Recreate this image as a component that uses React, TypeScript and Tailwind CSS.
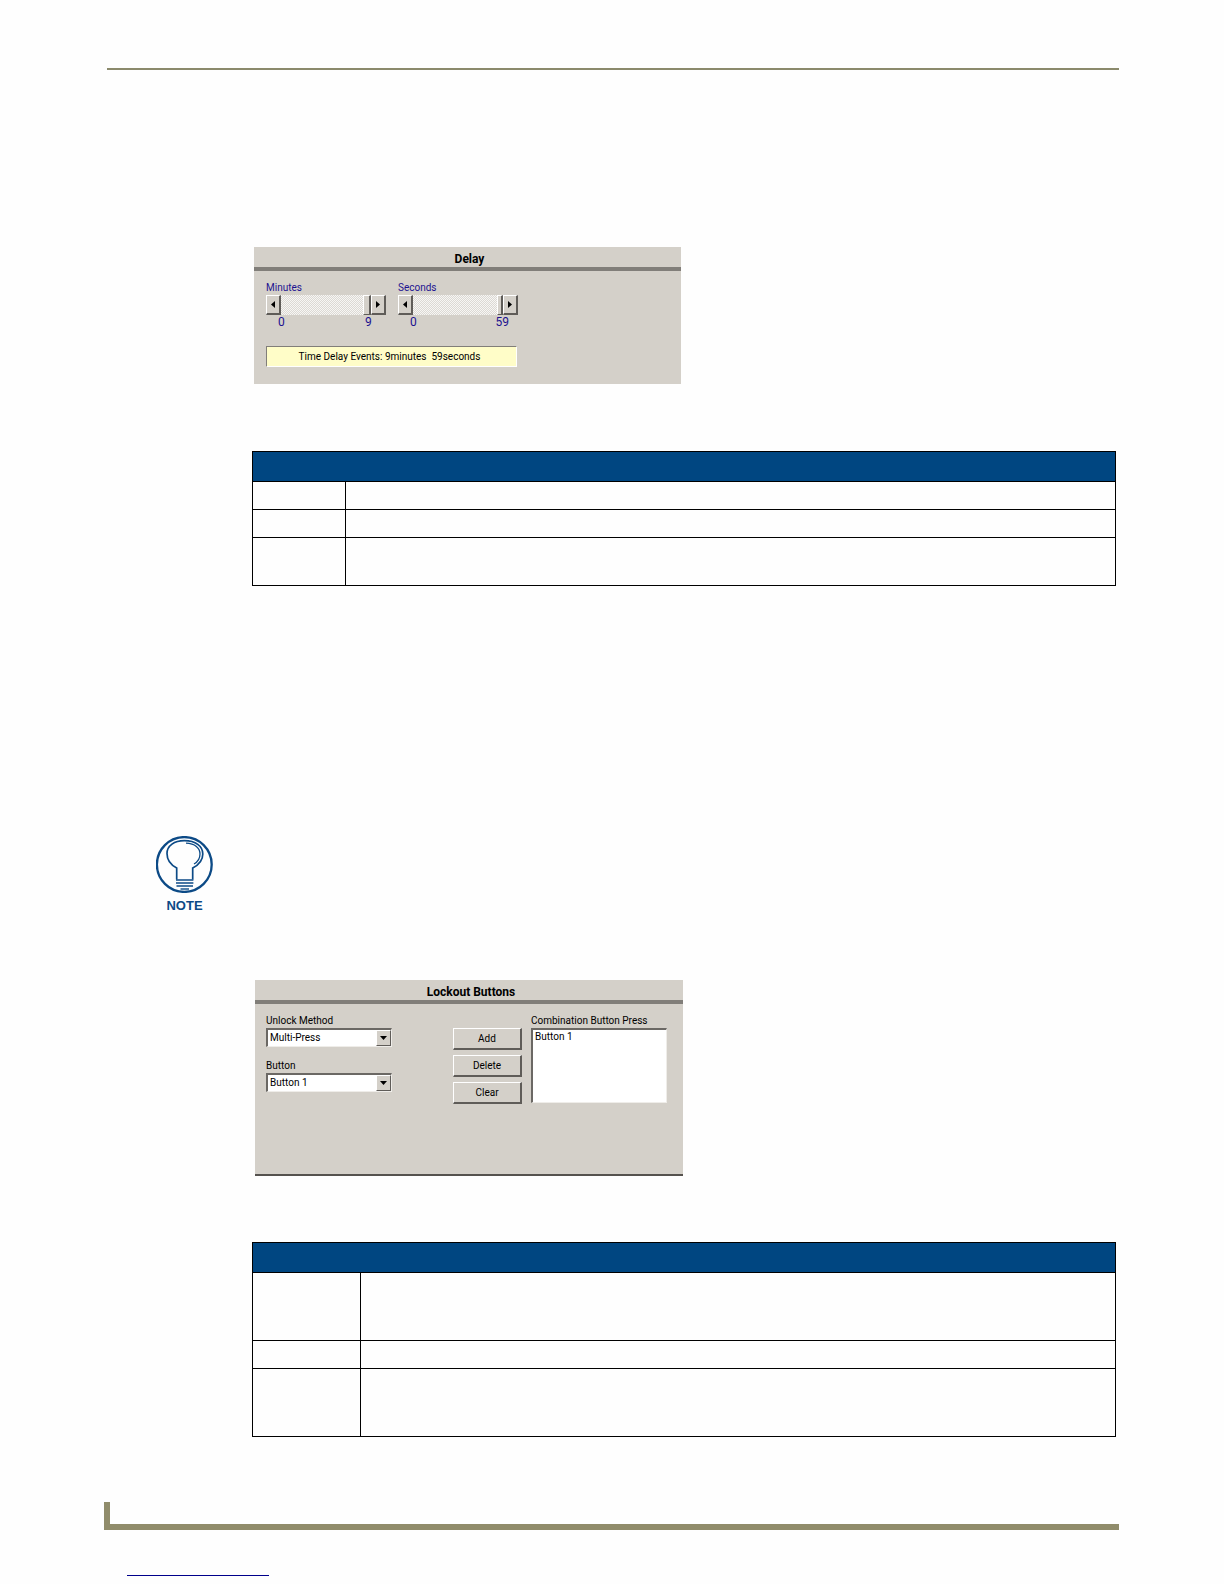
import React, { useState } from 'react'

interface PanelProps {
  title: string
  className?: string
  children: React.ReactNode
}

const Panel: React.FC<PanelProps> = ({ title, className = '', children }) => (
  <section className={`bg-[#d4d0c9] text-[10px] leading-3 text-black ${className}`}>
    <h2 className="h-6 border-b-4 border-[#817e79] pt-1.5 pl-1 text-center text-[12px] leading-3 font-bold">
      {title}
    </h2>
    {children}
  </section>
)

interface ScrollButtonProps {
  label: string
  points: string
  onClick: () => void
}

const ScrollButton: React.FC<ScrollButtonProps> = ({ label, points, onClick }) => (
  <button
    type="button"
    aria-label={label}
    onClick={onClick}
    className="flex h-5 w-[15px] shrink-0 items-center justify-center border border-r-2 border-b-2 border-t-white border-l-white border-r-[#5f5c58] border-b-[#5f5c58] bg-[#d4d0c9]"
  >
    <svg width="4" height="7" viewBox="0 0 4 7">
      <polygon points={points} fill="#000" />
    </svg>
  </button>
)

interface DelaySliderProps {
  id: string
  label: string
  max: number
  thumb: string
}

const DelaySlider: React.FC<DelaySliderProps> = ({ id, label, max, thumb }) => {
  const [value, setValue] = useState(max)

  return (
    <div className="w-[120px] text-[#1c1290]">
      <label htmlFor={id} className="block">{label}</label>
      <div className="mt-px flex">
        <ScrollButton
          label={`${label} down`}
          points="4,0 0,3.5 4,7"
          onClick={() => setValue(Math.max(0, value - 1))}
        />
        <input
          id={id}
          type="range"
          min={0}
          max={max}
          value={value}
          onChange={(e) => setValue(Number(e.target.value))}
          className={`h-5 w-[90px] appearance-none bg-[#ebe9e5] bg-[repeating-conic-gradient(#dcd9d4_0_25%,#f7f6f4_0_50%)] bg-[length:2px_2px] [&::-webkit-slider-thumb]:h-5 [&::-webkit-slider-thumb]:appearance-none [&::-webkit-slider-thumb]:border [&::-webkit-slider-thumb]:border-r-2 [&::-webkit-slider-thumb]:border-t-white [&::-webkit-slider-thumb]:border-l-white [&::-webkit-slider-thumb]:border-r-[#5f5c58] [&::-webkit-slider-thumb]:border-b-[#5f5c58] [&::-webkit-slider-thumb]:bg-[#d4d0c9] ${thumb}`}
        />
        <ScrollButton
          label={`${label} up`}
          points="0,0 4,3.5 0,7"
          onClick={() => setValue(Math.min(max, value + 1))}
        />
      </div>
      <div className="mt-px flex justify-between pr-[9px] pl-3 text-[12px] leading-3">
        <span>0</span>
        <span className="min-w-3">{max}</span>
      </div>
    </div>
  )
}

interface DropDownProps {
  id: string
  label: string
  options: string[]
}

const DropDown: React.FC<DropDownProps> = ({ id, label, options }) => (
  <div className="w-[126px]">
    <label htmlFor={id} className="block">{label}</label>
    <div className="relative mt-px">
      <select
        id={id}
        className="block h-[19px] w-full appearance-none border border-t-2 border-l-2 border-t-[#6b6864] border-l-[#6b6864] border-r-[#efede9] border-b-[#efede9] bg-white pl-0.5 leading-3"
      >
        {options.map((option) => <option key={option}>{option}</option>)}
      </select>
      <span className="pointer-events-none absolute top-0.5 right-px flex h-4 w-[15px] items-center justify-center border border-t-white border-l-white border-r-[#5f5c58] border-b-[#5f5c58] bg-[#d4d0c9]">
        <svg width="7" height="4" viewBox="0 0 7 4">
          <polygon points="0,0 7,0 3.5,4" fill="#000" />
        </svg>
      </span>
    </div>
  </div>
)

interface PropertyTableProps {
  className?: string
  firstColumn: string
  rows: string[]
}

// 속성 표: 행 높이만 지정, 내용은 비어 있음
const PropertyTable: React.FC<PropertyTableProps> = ({ className = '', firstColumn, rows }) => (
  <table className={`w-full table-fixed border-collapse ${className}`}>
    <colgroup>
      <col className={firstColumn} />
      <col />
    </colgroup>
    <thead>
      <tr className="h-[30px]">
        <th colSpan={2} className="border border-black bg-[#004681]" />
      </tr>
    </thead>
    <tbody>
      {rows.map((height, i) => (
        <tr key={i} className={height}>
          <td className="border border-black" />
          <td className="border border-black" />
        </tr>
      ))}
    </tbody>
  </table>
)

const NoteIcon: React.FC = () => (
  <svg width="57" height="57" viewBox="0 0 57 57" fill="none" stroke="#0c4a86">
    <circle cx="28.3" cy="28.5" r="27.4" strokeWidth="2.3" />
    <path
      d="M20.7 43.5V32C14 28.5 11 23.5 11 17.5C11 9.5 18.5 4.7 28.3 4.7C39.5 4.7 46.8 10 46.8 18C46.8 24.5 43.5 28.5 36.7 32V43.5"
      strokeWidth="1.7"
    />
    <path d="M30 7.2C39 7.5 44 12 44 18C44 23 41.5 26 38 28" strokeWidth="1.3" />
    <path d="M20 44H37.4M20 47H37.4M20.5 50H37" strokeWidth="1.7" />
    <path d="M24.5 53H33" strokeWidth="1.4" />
  </svg>
)

const actions = ['Add', 'Delete', 'Clear']

const App: React.FC = () => (
  <div className="bg-[#fefefe] pt-[68px] pr-[105px] pb-2 pl-[104px] font-['Roboto',sans-serif]">
    <header className="ml-[3px] h-0.5 bg-[#8b8a6c]" />

    <main className="pr-[3px] pl-[148px]">
      {/* Delay */}
      <Panel title="Delay" className="mt-[177px] ml-0.5 h-[137px] w-[427px]">
        <div className="flex gap-3 pt-[11px] pl-3">
          <DelaySlider
            id="minutes"
            label="Minutes"
            max={9}
            thumb="[&::-webkit-slider-thumb]:w-2"
          />
          <DelaySlider
            id="seconds"
            label="Seconds"
            max={59}
            thumb="[&::-webkit-slider-thumb]:w-1.5"
          />
        </div>
        <output className="mt-[18px] ml-3 flex h-[21px] w-[251px] items-center justify-center border border-t-[#817e79] border-l-[#817e79] border-r-white border-b-white bg-[#fffdc8] pt-px pr-1 whitespace-pre">
          Time Delay Events: 9minutes  59seconds
        </output>
      </Panel>

      <PropertyTable
        className="mt-[67px]"
        firstColumn="w-[93px]"
        rows={['h-[28px]', 'h-[28px]', 'h-[48px]']}
      />

      {/* Note */}
      <figure className="mt-[250px] -ml-24 flex w-[57px] flex-col items-center">
        <NoteIcon />
        <figcaption className="mt-[5px] font-['Liberation_Sans',sans-serif] text-[13px] leading-4 font-bold text-[#0c4a86]">
          NOTE
        </figcaption>
      </figure>

      {/* Lockout Buttons */}
      <Panel title="Lockout Buttons" className="mt-[66px] ml-[3px] h-[196px] w-[428px] border-b-2 border-[#55524e]">
        <div className="flex pt-[11px] pl-[11px]">
          <div className="flex flex-col gap-[13px]">
            <DropDown id="unlock-method" label="Unlock Method" options={['Multi-Press']} />
            <DropDown id="button" label="Button" options={['Button 1']} />
          </div>
          <div className="mt-[13px] ml-[61px] flex flex-col gap-[5px]">
            {actions.map((action) => (
              <button
                key={action}
                type="button"
                className="h-[22px] w-[69px] border border-r-2 border-b-2 border-t-white border-l-white border-r-[#5f5c58] border-b-[#5f5c58]"
              >
                {action}
              </button>
            ))}
          </div>
          <div className="ml-[9px] w-[136px]">
            <label htmlFor="combination" className="block">Combination Button Press</label>
            <select
              id="combination"
              size={5}
              className="mt-px block h-[75px] w-full appearance-none overflow-hidden border border-t-2 border-l-2 border-t-[#6b6864] border-l-[#6b6864] border-r-[#efede9] border-b-[#efede9] bg-white"
            >
              <option className="pt-px pl-0.5">Button 1</option>
            </select>
          </div>
        </div>
      </Panel>

      <PropertyTable
        className="mt-[66px]"
        firstColumn="w-[108px]"
        rows={['h-[68px]', 'h-[28px]', 'h-[68px]']}
      />
    </main>

    <footer>
      <div className="mt-[65px] h-7 border-b-6 border-l-6 border-[#908c6b]" />
      <a
        href="#top"
        aria-label="Top of page"
        className="mt-[30px] ml-[23px] block h-4 w-[142px] border-b border-[#00008b]"
      />
    </footer>
  </div>
)

export default App
